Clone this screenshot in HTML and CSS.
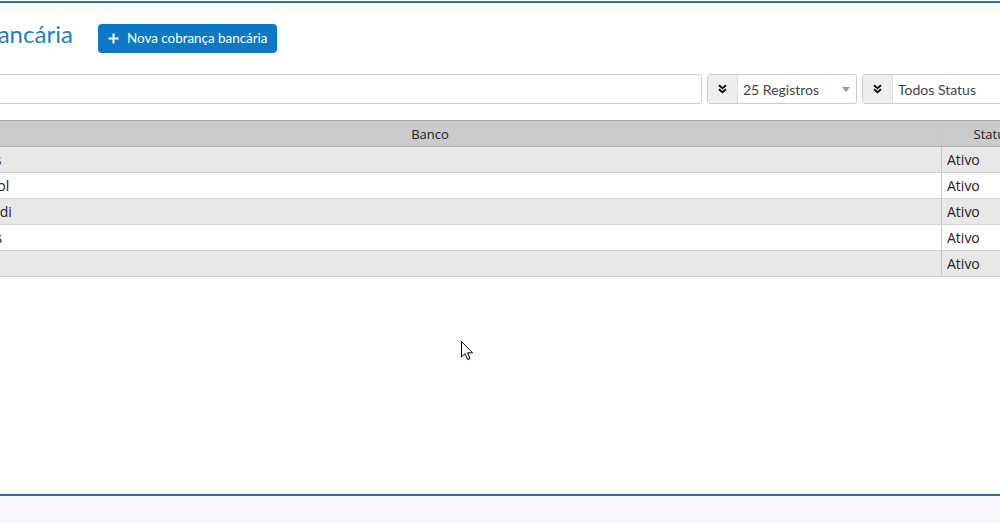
FILE: index.html
```html
<!DOCTYPE html>
<html lang="pt-BR">
<head>
    <meta charset="UTF-8">
    <meta name="viewport" content="width=device-width, initial-scale=1.0">
    <title>Cobrança bancária</title>
    <link rel="stylesheet" href="styles.css">
</head>
<body>
    <div class="topline"></div>
    <div class="page">
        <div class="heading">
            <h1 class="title">Cobrança bancária</h1>
            <button class="btn-new">
                <svg width="11" height="11" viewBox="0 0 11 11"><path d="M5.5 0.5v10M0.5 5.5h10" stroke="#fff" stroke-width="2"/></svg>
                Nova cobrança bancária
            </button>
        </div>

        <div class="filters">
            <input class="search" type="text">
            <div class="select-group">
                <span class="addon">
                    <svg width="9" height="10" viewBox="0 0 9 10"><path d="M1 1.2l3.5 3 3.5-3M1 5.2l3.5 3 3.5-3" fill="none" stroke="#111" stroke-width="2"/></svg>
                </span>
                <div class="select">25 Registros<span class="caret"></span></div>
            </div>
            <div class="select-group wide">
                <span class="addon">
                    <svg width="9" height="10" viewBox="0 0 9 10"><path d="M1 1.2l3.5 3 3.5-3M1 5.2l3.5 3 3.5-3" fill="none" stroke="#111" stroke-width="2"/></svg>
                </span>
                <div class="select">Todos Status</div>
            </div>
        </div>

        <table class="grid">
            <thead>
                <tr><th class="col-bank">Banco</th><th class="col-status">Status</th></tr>
            </thead>
            <tbody>
                <tr><td>Sicoob Alias</td><td>Ativo</td></tr>
                <tr><td>Banco Cresol</td><td>Ativo</td></tr>
                <tr><td>Banco Sicredi</td><td>Ativo</td></tr>
                <tr><td>Banco Artes</td><td>Ativo</td></tr>
                <tr><td>Itaú</td><td>Ativo</td></tr>
            </tbody>
        </table>
    </div>
    <div class="footer"></div>

    <svg class="cursor" width="13" height="20" viewBox="0 0 13 20">
        <path d="M0.5 0.5v15.5l3.6-3.4 2.6 6 2.3-1-2.5-5.8h5z" fill="#fff" stroke="#000" stroke-width="1"/>
    </svg>
</body>
</html>
```

FILE: styles.css
```css
body {
    margin: 0;
    height: 523px;
    overflow: hidden;
    display: flex;
    flex-direction: column;
    background-color: #fff;
    font-family: "Open Sans", "Liberation Sans", sans-serif;
    color: #333;
    position: relative;
}

.topline {
    margin-top: 1px;
    height: 2px;
    background-color: #2b72ab;
}

.page {
    flex: 1;
    width: 1165px;
    margin-left: -122px;
}

.heading {
    display: flex;
    align-items: center;
    margin-top: 20px;
    height: 30px;
}

.title {
    margin: 0 0 9px;
    font-family: Lato, "Open Sans", sans-serif;
    font-weight: 400;
    font-size: 24px;
    line-height: 28px;
    color: #1e7ec3;
    width: 195px;
    white-space: nowrap;
}

.btn-new {
    display: flex;
    align-items: center;
    gap: 8px;
    height: 29px;
    margin-left: 25px;
    padding: 0 10px;
    border: none;
    border-radius: 4px;
    background-color: #0b79c5;
    color: #fff;
    font-family: Lato, "Open Sans", sans-serif;
    font-size: 13.4px;
    cursor: pointer;
}

.filters {
    display: flex;
    gap: 5px;
    margin-top: 21px;
    height: 30px;
}

.search {
    flex: 1;
    border: 1px solid #ccc;
    border-radius: 3px;
    margin: 0;
    padding: 0 8px;
}

.select-group {
    display: flex;
    width: 150px;
    border: 1px solid #ccc;
    border-radius: 3px;
    box-sizing: border-box;
}

.select-group.wide {
    width: 181px;
}

.addon {
    width: 29px;
    display: flex;
    align-items: center;
    justify-content: center;
    background-color: #eee;
    border-right: 1px solid #ddd;
}

.select {
    flex: 1;
    display: flex;
    align-items: center;
    padding-left: 5px;
    font-family: Lato, "Open Sans", sans-serif;
    font-size: 14px;
    color: #444;
    position: relative;
}

.caret {
    position: absolute;
    right: 6px;
    top: 12px;
    border-left: 4px solid transparent;
    border-right: 4px solid transparent;
    border-top: 5px solid #999;
}

.grid {
    margin-top: 16px;
    margin-left: 41px;
    width: calc(100% - 41px);
    border-collapse: collapse;
    font-size: 14px;
}

.grid th {
    height: 25px;
    padding: 0;
    background-color: #cbcbcb;
    border-top: 1px solid #a9a9a9;
    border-bottom: 1px solid #b3b3b3;
    font-size: 13px;
    font-weight: 400;
    color: #222;
    text-align: center;
}

.grid th + th,
.grid td + td {
    border-left: 1px solid #c6c6c6;
}

.col-status {
    width: 101px;
}

.grid td {
    height: 25px;
    padding: 0 5px;
    border-bottom: 1px solid #d2d2d2;
    color: #222;
}

.grid tbody tr:nth-child(odd) {
    background-color: #e8e8e8;
}

.footer {
    height: 27px;
    border-top: 2px solid #2a6f98;
    background-color: #f6f7fa;
}

.cursor {
    position: absolute;
    left: 461px;
    top: 341px;
}
```
